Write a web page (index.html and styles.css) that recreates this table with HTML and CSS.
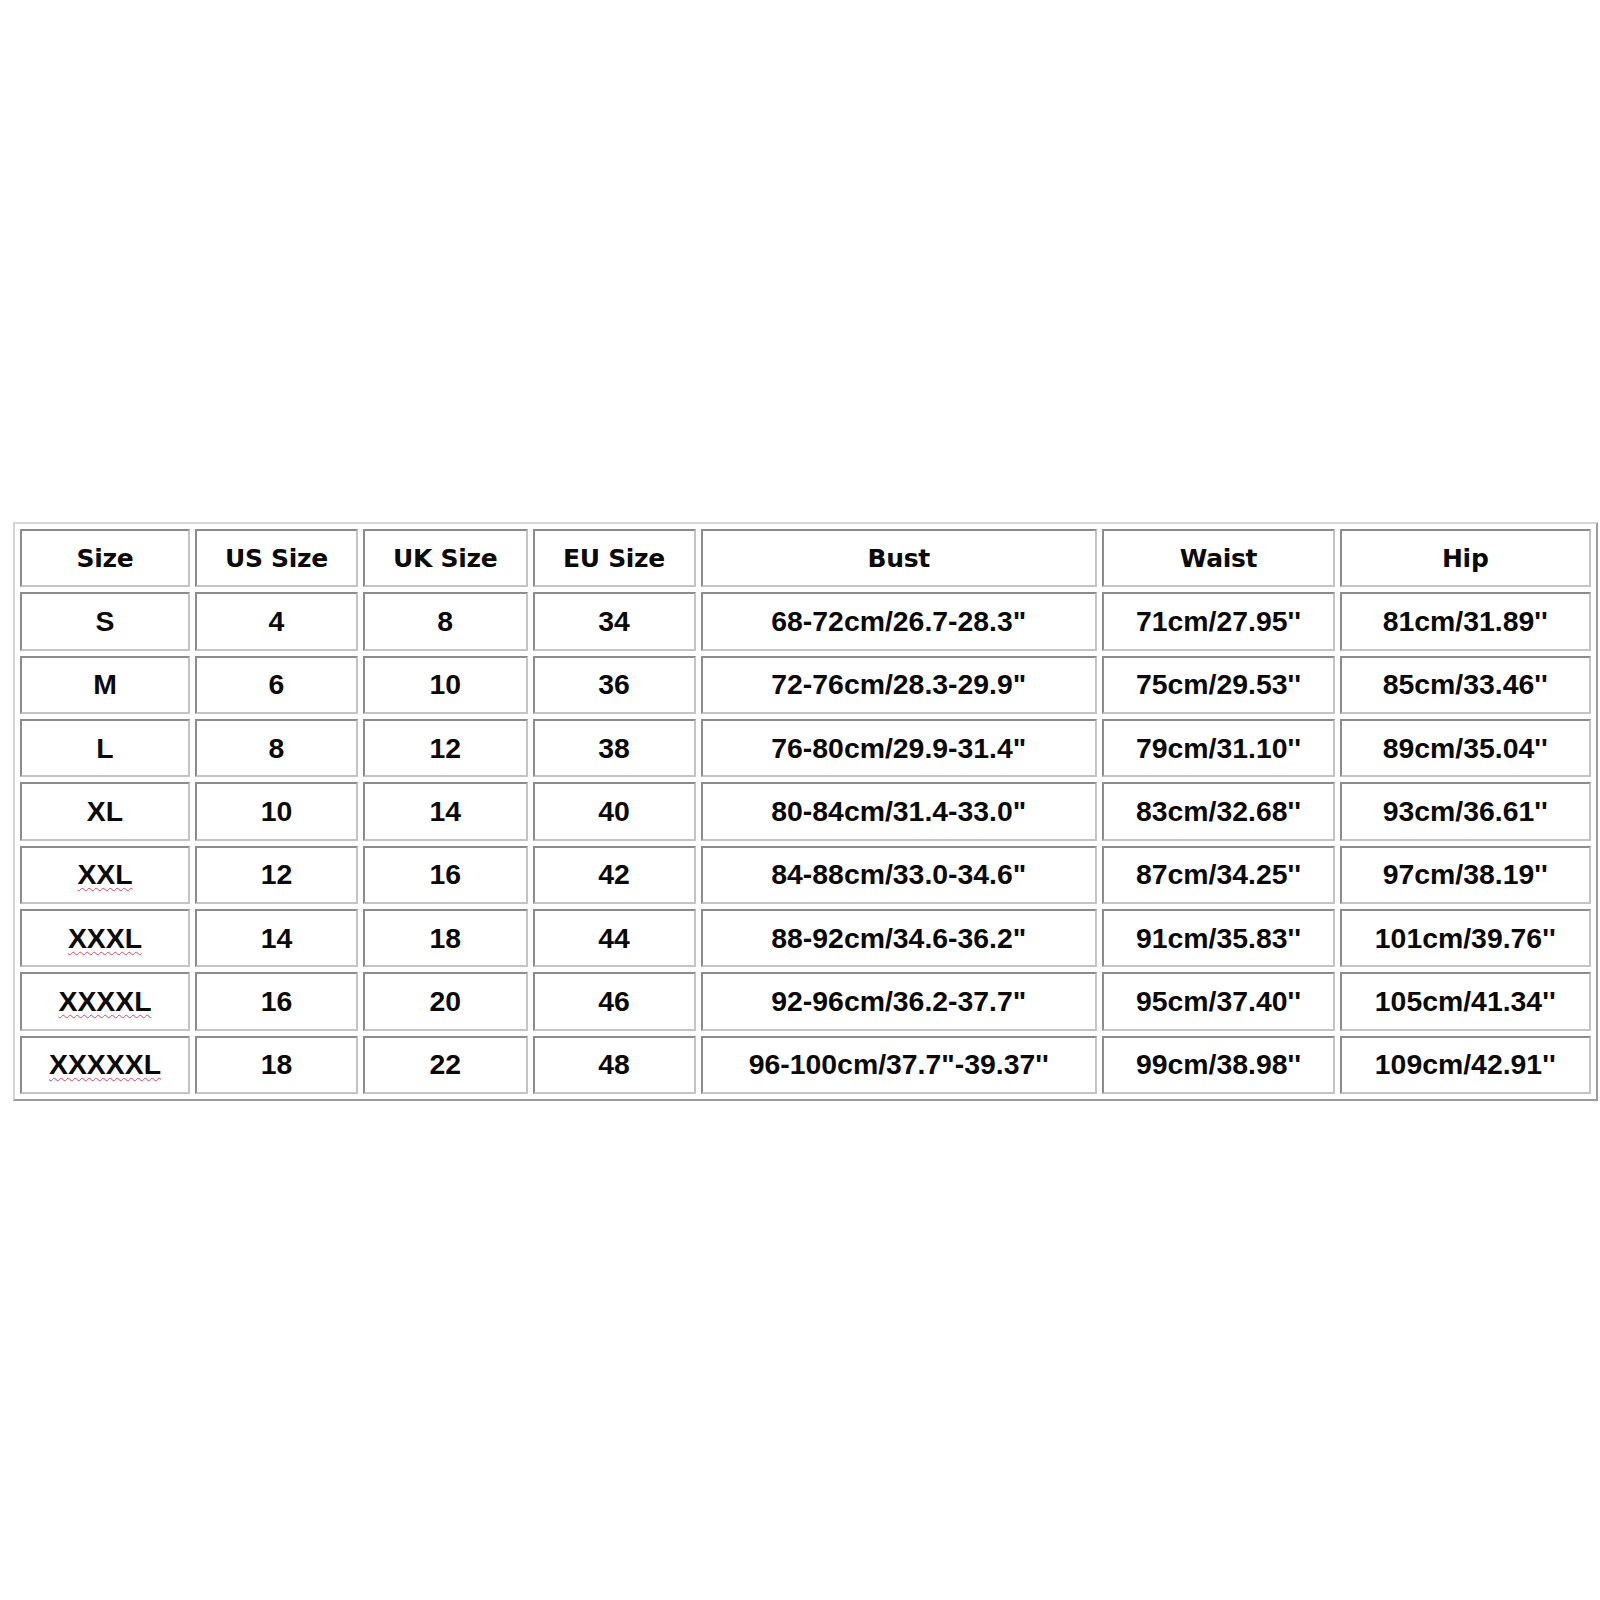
FILE: index.html
```html
<!DOCTYPE html>
<html lang="en">
<head>
<meta charset="utf-8">
<title>Size Chart</title>
<link rel="stylesheet" href="styles.css">
</head>
<body>
<table class="chart">
  <colgroup>
    <col class="c1"><col class="c2"><col class="c3"><col class="c4"><col class="c5"><col class="c6"><col class="c7">
  </colgroup>
  <thead>
    <tr><th>Size</th><th>US Size</th><th>UK Size</th><th>EU Size</th><th>Bust</th><th>Waist</th><th>Hip</th></tr>
  </thead>
  <tbody>
    <tr><td>S</td><td>4</td><td>8</td><td>34</td><td>68-72cm/26.7-28.3"</td><td>71cm/27.95''</td><td>81cm/31.89''</td></tr>
    <tr><td>M</td><td>6</td><td>10</td><td>36</td><td>72-76cm/28.3-29.9"</td><td>75cm/29.53''</td><td>85cm/33.46''</td></tr>
    <tr><td>L</td><td>8</td><td>12</td><td>38</td><td>76-80cm/29.9-31.4"</td><td>79cm/31.10''</td><td>89cm/35.04''</td></tr>
    <tr><td>XL</td><td>10</td><td>14</td><td>40</td><td>80-84cm/31.4-33.0"</td><td>83cm/32.68''</td><td>93cm/36.61''</td></tr>
    <tr><td><span class="spell">XXL</span></td><td>12</td><td>16</td><td>42</td><td>84-88cm/33.0-34.6"</td><td>87cm/34.25''</td><td>97cm/38.19''</td></tr>
    <tr><td><span class="spell">XXXL</span></td><td>14</td><td>18</td><td>44</td><td>88-92cm/34.6-36.2"</td><td>91cm/35.83''</td><td>101cm/39.76''</td></tr>
    <tr><td><span class="spell">XXXXL</span></td><td>16</td><td>20</td><td>46</td><td>92-96cm/36.2-37.7"</td><td>95cm/37.40''</td><td>105cm/41.34''</td></tr>
    <tr><td><span class="spell">XXXXXL</span></td><td>18</td><td>22</td><td>48</td><td>96-100cm/37.7"-39.37''</td><td>99cm/38.98''</td><td>109cm/42.91''</td></tr>
  </tbody>
</table>
</body>
</html>
```
FILE: styles.css
```css
html, body {
  margin: 0;
  padding: 0;
  background: #ffffff;
}

.chart {
  margin: 522px 0 0 13px;
  width: 1584px;
  table-layout: fixed;
  border-collapse: separate;
  border-spacing: 5px;
  border-style: solid;
  border-width: 2px;
  border-color: #d6d6d6 #9c9c9c #9c9c9c #d6d6d6;
  box-sizing: border-box;
}

.c1 { width: 170px; }
.c2 { width: 163px; }
.c3 { width: 164.5px; }
.c4 { width: 163px; }
.c5 { width: 396.5px; }
.c6 { width: 233px; }
.c7 { width: 250.5px; }

.chart th,
.chart td {
  box-sizing: border-box;
  height: 58.33px;
  padding: 0;
  text-align: center;
  vertical-align: middle;
  color: #0a0a0a;
  border-style: solid;
  border-width: 2px;
  border-color: #8c8c8c #c4c4c4 #c4c4c4 #8c8c8c;
  white-space: nowrap;
}

.chart th {
  font-family: "DejaVu Sans", Verdana, sans-serif;
  font-weight: bold;
  font-size: 25px;
  letter-spacing: -0.3px;
}

.chart td {
  font-family: "Liberation Sans", Arial, sans-serif;
  font-weight: bold;
  font-size: 28.4px;
}

.spell {
  text-decoration-line: underline;
  text-decoration-style: wavy;
  text-decoration-color: #d04868;
  text-decoration-thickness: 1px;
  text-underline-offset: 3px;
}
```
